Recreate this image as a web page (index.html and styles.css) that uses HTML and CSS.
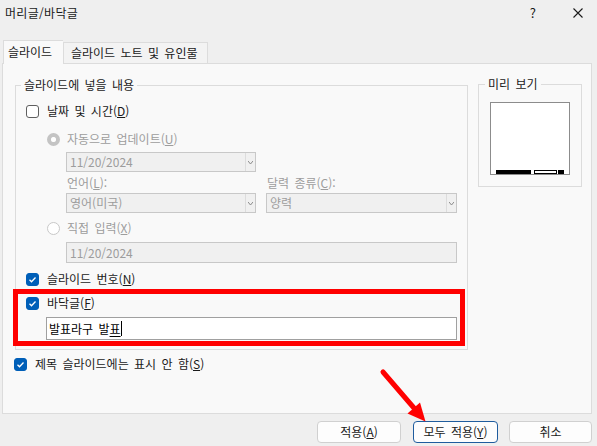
FILE: index.html
```html
<!DOCTYPE html>
<html lang="ko">
<head>
<meta charset="utf-8">
<title>머리글/바닥글</title>
<link rel="stylesheet" href="styles.css">
</head>
<body>
<div class="dialog">
  <div class="titlebar">
    <span class="title">머리글/바닥글</span>
    <span class="tb-btns">
      <span class="help">?</span>
      <svg class="close" width="10" height="10" viewBox="0 0 10 10"><path d="M0.5 0.5L9.5 9.5M9.5 0.5L0.5 9.5" stroke="#1a1a1a" stroke-width="1.1" fill="none"/></svg>
    </span>
  </div>

  <div class="tabs">
    <div class="tab active">슬라이드</div>
    <div class="tab">슬라이드 노트 및 유인물</div>
  </div>

  <div class="panel">
    <div class="left">
      <fieldset class="group">
        <legend>슬라이드에 넣을 내용</legend>

        <div class="row r-date"><span class="cb"></span><span>날짜 및 시간(<u>D</u>)</span></div>

        <div class="row radio-row r-auto"><svg class="rd" width="13" height="13" viewBox="0 0 13 13"><circle cx="6.5" cy="6.5" r="4.5" fill="#fff" stroke="#c4c4c4" stroke-width="4"/><circle cx="6.5" cy="6.5" r="2.2" fill="#fff"/></svg><span class="dis">자동으로 업데이트(<u>U</u>)</span></div>

        <div class="indent">
          <div class="sel w190 s-date"><span class="v">11/20/2024</span><span class="dd"><svg width="5" height="3" viewBox="0 0 5 3"><path d="M0 0L2.5 3L5 0" stroke="#8a8a8a" fill="none"/></svg></span></div>

          <div class="labels">
            <span class="lab dis">언어(<u>L</u>):</span>
            <span class="lab dis">달력 종류(<u>C</u>):</span>
          </div>

          <div class="selects">
            <div class="sel w190"><span class="v">영어(미국)</span><span class="dd"><svg width="5" height="3" viewBox="0 0 5 3"><path d="M0 0L2.5 3L5 0" stroke="#8a8a8a" fill="none"/></svg></span></div>
            <div class="sel w191"><span class="v">양력</span><span class="dd"><svg width="5" height="3" viewBox="0 0 5 3"><path d="M0 0L2.5 3L5 0" stroke="#8a8a8a" fill="none"/></svg></span></div>
          </div>
        </div>

        <div class="row radio-row r-fixed"><svg class="rd" width="13" height="13" viewBox="0 0 13 13"><circle cx="6.5" cy="6.5" r="6" fill="#fff" stroke="#c8c8c8" stroke-width="1"/></svg><span class="dis">직접 입력(<u>X</u>)</span></div>

        <div class="indent">
          <div class="dinput">11/20/2024</div>
        </div>

        <div class="row r-num"><span class="cb on"><svg width="11" height="11" viewBox="0 0 11 11"><path d="M2.5 5.8L4.5 7.8L8.5 3.5" stroke="#fff" stroke-width="1.3" fill="none"/></svg></span><span>슬라이드 번호(<u>N</u>)</span></div>

        <div class="footer">
          <div class="row"><span class="cb on"><svg width="11" height="11" viewBox="0 0 11 11"><path d="M2.5 5.8L4.5 7.8L8.5 3.5" stroke="#fff" stroke-width="1.3" fill="none"/></svg></span><span>바닥글(<u>F</u>)</span></div>
          <div class="txt"><span>발표라구 발</span><span class="comp">표</span><span class="caret"></span></div>
        </div>
      </fieldset>

      <div class="row r-title"><span class="cb on"><svg width="11" height="11" viewBox="0 0 11 11"><path d="M2.5 5.8L4.5 7.8L8.5 3.5" stroke="#fff" stroke-width="1.3" fill="none"/></svg></span><span>제목 슬라이드에는 표시 안 함(<u>S</u>)</span></div>
    </div>

    <fieldset class="preview">
      <legend>미리 보기</legend>
      <div class="pbox">
        <span class="bar b1"></span><span class="bar b2"></span><span class="bar b3"></span>
      </div>
    </fieldset>
  </div>

  <div class="buttons">
    <div class="btn b-apply">적용(<u>A</u>)</div>
    <div class="btn b-all primary">모두 적용(<u>Y</u>)</div>
    <div class="btn b-cancel">취소</div>
  </div>

  <svg class="arrow" width="597" height="446" viewBox="0 0 597 446">
    <line x1="383" y1="372" x2="414" y2="408" stroke="#f00" stroke-width="5" stroke-linecap="round"/>
    <polygon points="407.5,413.5 420,402.5 425.5,421.5" fill="#f00"/>
  </svg>
</div>
</body>
</html>
```

FILE: styles.css
```css
html, body {
  margin: 0;
  padding: 0;
}
body {
  background: #efefef;
  font-family: "Noto Sans CJK KR", "Noto Sans", sans-serif;
  font-size: 12px;
  word-spacing: 2px;
  color: #1a1a1a;
}
u {
  text-decoration: underline;
  text-underline-offset: 1px;
}
.dialog {
  position: relative;
  width: 597px;
  height: 446px;
  overflow: hidden;
}

/* title bar */
.titlebar {
  height: 26px;
  display: flex;
  align-items: center;
  padding-left: 5px;
}
.title {
  line-height: 16px;
  letter-spacing: 0.3px;
}
.tb-btns {
  margin-left: auto;
  display: flex;
  align-items: center;
}
.help {
  font-size: 13px;
  line-height: 16px;
  margin-right: 37px;
}
.close {
  display: block;
  margin-right: 14px;
}

/* tabs */
.tabs {
  display: flex;
  align-items: flex-end;
  margin-top: 14px;
  height: 23px;
  padding-left: 3px;
  position: relative;
  z-index: 1;
}
.tab {
  box-sizing: border-box;
  height: 21px;
  border: 1px solid #dcdcdc;
  border-bottom: none;
  background: #f3f3f3;
  line-height: 18px;
  padding: 1px 0 0 7px;
  width: 145px;
}
.tab.active {
  width: 60px;
  height: 24px;
  margin-bottom: -1px;
  background: #f9f9f9;
  padding: 2px 0 0 4px;
  border-right: none;
}

/* panel */
.panel {
  margin: 0 5px 0 2px;
  height: 351px;
  box-sizing: border-box;
  border: 1px solid #dcdcdc;
  background: #f9f9f9;
  display: flex;
  align-items: flex-start;
  gap: 10px;
  padding: 13px 9px 0 12px;
}
.left {
  width: 453px;
}
fieldset {
  margin: 0;
  min-width: 0;
  box-sizing: border-box;
  border: 1px solid #dcdcdc;
}
legend {
  padding: 0 3px;
  margin-left: -5px;
  line-height: 16px;
}
.group {
  width: 453px;
  padding: 8px 10px 9px 10px;
}

.row {
  display: flex;
  align-items: center;
  height: 20px;
  line-height: 16px;
}
.radio-row {
  padding-left: 21px;
}
.r-auto { margin-top: 8px; }
.r-fixed { margin-top: 5px; }
.r-num { margin-top: 6px; }

.cb {
  flex: none;
  width: 13px;
  height: 13px;
  box-sizing: border-box;
  border: 1px solid #5f5f5f;
  border-radius: 3px;
  background: #fff;
  margin-right: 8px;
  display: flex;
  align-items: center;
  justify-content: center;
}
.cb.on {
  background: #005fb8;
  border-color: #005fb8;
}
.cb svg { display: block; }

.rd {
  flex: none;
  display: block;
  margin-right: 7px;
}
.dis {
  color: #9d9d9d;
}

.indent {
  padding-left: 40px;
}
.sel {
  display: flex;
  align-items: center;
  height: 20px;
  box-sizing: border-box;
  border: 1px solid #c8c8c8;
  background: #f0f0f0;
  color: #9d9d9d;
  line-height: 16px;
}
.w190 { width: 190px; }
.w191 { width: 191px; }
.s-date { margin-top: 3px; }
.sel .v {
  flex: 1;
  padding-left: 3px;
}
.sel .dd {
  align-self: stretch;
  width: 9px;
  border-left: 1px solid #dcdcdc;
  display: flex;
  align-items: center;
  justify-content: center;
}
.sel .dd svg { display: block; }

.labels {
  display: flex;
  gap: 10px;
  height: 16px;
  line-height: 16px;
  margin-top: 3px;
}
.lab {
  width: 189px;
  padding-left: 1px;
}
.selects {
  display: flex;
  gap: 10px;
  margin-top: 2px;
}

.dinput {
  margin-top: 4px;
  width: 391px;
  height: 21px;
  box-sizing: border-box;
  border: 1px solid #c8c8c8;
  background: #f0f0f0;
  color: #9d9d9d;
  padding-left: 3px;
  line-height: 19px;
}

/* footer with highlight */
.footer {
  position: relative;
  margin-top: 4px;
}
.footer::before {
  content: "";
  position: absolute;
  left: -13px;
  right: -8px;
  top: -4px;
  bottom: -6px;
  border: 5px solid #f00;
  pointer-events: none;
}
.txt {
  margin: 4px 0 0 20px;
  width: 411px;
  height: 23px;
  box-sizing: border-box;
  border: 1px solid #a0a0a0;
  background: #fff;
  padding-left: 2px;
  display: flex;
  align-items: center;
  color: #000;
  line-height: 16px;
  white-space: pre;
}
.comp {
  text-decoration: underline;
  text-underline-offset: 2px;
}
.caret {
  width: 1px;
  height: 15px;
  background: #000;
}

.r-title {
  margin-top: 4px;
  margin-left: -1px;
}

/* preview */
.preview {
  width: 104px;
  margin-top: -1px;
  padding: 10px 11px 11px 11px;
}
.pbox {
  width: 80px;
  height: 73px;
  box-sizing: border-box;
  border: 1px solid #8c8c8c;
  background: #fff;
  display: flex;
  align-items: flex-end;
  padding: 0 5px 0 5px;
}
.bar {
  height: 4px;
  box-sizing: border-box;
}
.b1 { width: 36px; background: #000; }
.b2 { width: 23px; margin-left: 3px; border: 1px solid #000; background: #fff; }
.b3 { width: 6px; margin-left: 1px; background: #000; }

/* buttons */
.buttons {
  display: flex;
  justify-content: flex-end;
  margin-top: 7px;
  padding-right: 5px;
}
.btn {
  height: 22px;
  box-sizing: border-box;
  border: 1px solid #d0d0d0;
  border-radius: 4px;
  background: #fdfdfd;
  display: flex;
  align-items: center;
  justify-content: center;
  line-height: 16px;
}
.b-apply { width: 84px; }
.b-all { width: 85px; margin-left: 12px; }
.b-cancel { width: 83px; margin-left: 11px; }
.primary {
  border-color: #1f5c9e;
}

.arrow {
  position: absolute;
  left: 0;
  top: 0;
  pointer-events: none;
}
```
